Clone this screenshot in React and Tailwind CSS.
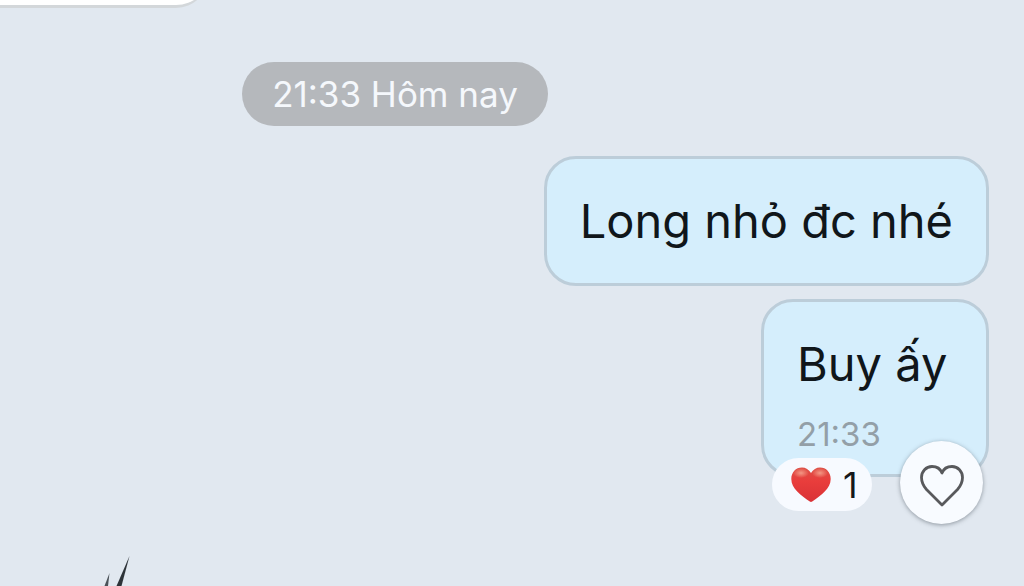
import React, { useState } from "react";

function Bubble({ text, time, children }) {
  return (
    <div className="relative min-w-[228px] rounded-[32px] border-[3px] border-[#bccdd9] bg-[#d5eefc] px-[33px] py-8">
      <p className="text-[47px] leading-[60px] text-[#10161a]">{text}</p>
      {time && (
        <time className="mt-[22px] -mb-[10px] block text-[33px] leading-[36px] text-[#939fa7]">
          {time}
        </time>
      )}
      {children}
    </div>
  );
}

function RedHeart() {
  return (
    <svg className="h-9 w-10 shrink-0" viewBox="0 0 40 36" aria-hidden="true">
      <defs>
        <linearGradient id="heart-fill" x1="0" y1="0" x2="0" y2="1">
          <stop offset="0" stopColor="#dd5046" />
          <stop offset="0.4" stopColor="#e93d3c" />
          <stop offset="1" stopColor="#d93236" />
        </linearGradient>
        <radialGradient id="heart-shine">
          <stop offset="0" stopColor="#f6a08c" stopOpacity="0.9" />
          <stop offset="1" stopColor="#f6a08c" stopOpacity="0" />
        </radialGradient>
      </defs>
      <path
        d="M20 6C18 2.500 14.500 0.500 11 0.500C4.800 0.500 0.300 5.300 0.300 12C0.300 22 10 28 18.800 34.600Q20 35.500 21.200 34.600C30 28 39.700 22 39.700 12C39.700 5.300 35.200 0.500 29 0.500C25.500 0.500 22 2.500 20 6Z"
        fill="url(#heart-fill)"
      />
      <ellipse cx="10" cy="6" rx="8" ry="5" fill="url(#heart-shine)" />
      <ellipse cx="29" cy="6" rx="8" ry="5" fill="url(#heart-shine)" />
    </svg>
  );
}

function OutlineHeart() {
  return (
    <svg className="h-11 w-12" viewBox="0 0 48 44" fill="none" aria-hidden="true">
      <path
        d="M24 10C22.500 6 18.500 3.500 14 3.500C8 3.500 3.500 8.500 3.500 14.500C3.500 19 5 22.500 8.500 26.500L24 42L39.500 26.500C43 22.500 44.500 19 44.500 14.500C44.500 8.500 40 3.500 34 3.500C29.500 3.500 25.500 6 24 10Z"
        stroke="#58595c"
        strokeWidth="2.800"
        strokeLinejoin="round"
      />
    </svg>
  );
}

export default function App() {
  const [count, setCount] = useState(1);

  return (
    <main className="flex h-screen flex-col overflow-hidden bg-[#e1e8f0] font-['Inter',sans-serif]">
      {/* tail of the previous incoming message */}
      <div className="-mt-14 h-16 w-[208px] shrink-0 rounded-r-[32px] border-b-[3px] border-[#d3d7da] bg-white" />

      <div className="mt-[54px] ml-[242px] flex h-16 w-[306px] shrink-0 items-center justify-center self-start rounded-full bg-[#b5b8bc] text-[35px] whitespace-nowrap text-[#f5f8fc]">
        21:33 Hôm nay
      </div>

      <div className="mt-[30px] mr-[35px] flex flex-col items-end gap-[13px]">
        <Bubble text="Long nhỏ đc nhé" />
        <Bubble text="Buy ấy" time="21:33">
          <div className="absolute right-[3px] -bottom-[50px] left-2 flex items-center justify-between">
            <span className="mt-1 flex h-[53px] items-center gap-3 rounded-full bg-[#f7faff] pr-[14px] pl-[19px] text-[36px] text-[#16181b]">
              <RedHeart />
              {count}
            </span>
            <button
              type="button"
              aria-label="Thả tim"
              onClick={() => setCount(count + 1)}
              className="flex size-[83px] items-center justify-center rounded-full bg-[#f8fbff] pt-1 shadow-[0_1px_4px_rgba(60,70,80,0.5)]"
            >
              <OutlineHeart />
            </button>
          </div>
        </Bubble>
      </div>

      <svg className="mt-auto ml-[104px] h-8 w-7 shrink-0" viewBox="0 0 28 32" aria-hidden="true">
        <path d="M25.500 2L17.500 32H12.500Q19 17 25.500 2Z" fill="#2d3338" />
        <path d="M5.500 19L4 32H0.500Z" fill="#4b5258" />
      </svg>
    </main>
  );
}
